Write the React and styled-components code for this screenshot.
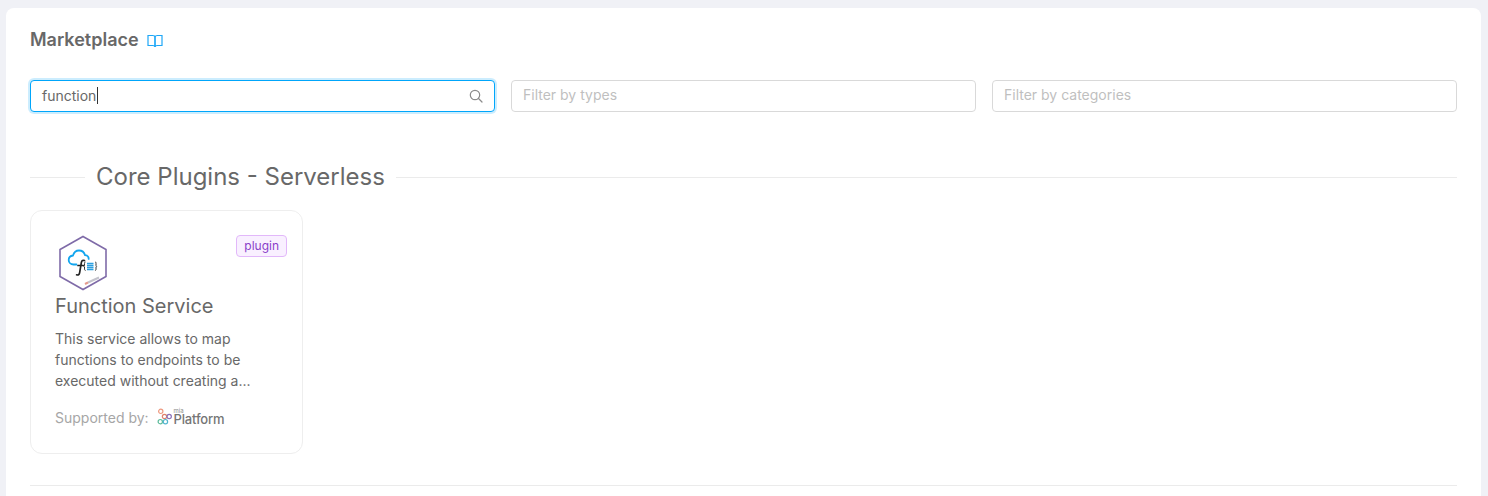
import React from "react";
import styled, { createGlobalStyle } from "styled-components";

const Global = createGlobalStyle`
  html, body {
    margin: 0;
    height: 100%;
    overflow: hidden;
    background: #f0f1f6;
    font-family: Inter, "Liberation Sans", sans-serif;
  }
  * { box-sizing: border-box; }
`;

const Panel = styled.main`
  margin: 8px 7px 0 6px;
  height: 488px;
  padding: 20px 24px 0;
  background: #fff;
  border-radius: 8px 8px 0 0;
  overflow: hidden;
`;

const TitleRow = styled.div`
  display: flex;
  align-items: center;
  gap: 8px;
  height: 24px;
`;

const Title = styled.h1`
  margin: 0;
  font-size: 18px;
  line-height: 24px;
  font-weight: 600;
  color: #686868;
`;

const Filters = styled.div`
  display: grid;
  grid-template-columns: repeat(3, 465px);
  gap: 16px;
  margin-top: 28px;
`;

const Field = styled.div`
  display: flex;
  align-items: center;
  justify-content: space-between;
  height: 32px;
  padding: 0 11px ${(p) => (p.$active ? "2px" : "3px")};
  border-radius: 4px;
  border: 1px solid ${(p) => (p.$active ? "#00a6fb" : "#d9d9d9")};
  box-shadow: ${(p) => (p.$active ? "0 0 0 2px rgba(0, 166, 251, 0.2)" : "none")};
  background: #fff;
  font-size: 14px;
  color: ${(p) => (p.$active ? "#686868" : "#bfbfbf")};
`;

const Typed = styled.span`
  display: inline-block;
  padding-right: 1px;
  border-right: 1px solid #333;
  line-height: 17px;
`;

const SearchIcon = styled.svg`
  width: 14px;
  height: 14px;
  margin-top: 2px;
`;

const SectionHeading = styled.div`
  display: flex;
  align-items: center;
  gap: 11px;
  margin-top: 48px;
  height: 34px;
  &::before, &::after {
    content: "";
    height: 1px;
    background: #ebebeb;
  }
  &::before { width: 55px; }
  &::after { flex: 1; }
`;

const SectionTitle = styled.h2`
  margin: 0;
  font-size: 24px;
  line-height: 34px;
  font-weight: 400;
  color: #686868;
`;

const Card = styled.article`
  position: relative;
  width: 273px;
  height: 244px;
  margin-top: 16px;
  padding: 24px 24px 0;
  border: 1px solid #eeeeee;
  border-radius: 12px;
  background: #fff;
`;

const Badge = styled.span`
  position: absolute;
  top: 24px;
  right: 15px;
  height: 22px;
  padding: 0 7px;
  border: 1px solid #e2b8fa;
  border-radius: 4px;
  background: #f9f0ff;
  color: #8a3fc9;
  font-size: 12px;
  line-height: 20px;
`;

const Logo = styled.svg`
  display: block;
  width: 56px;
  height: 56px;
`;

const CardTitle = styled.h3`
  margin: 2px 0 0;
  font-size: 20px;
  line-height: 26px;
  font-weight: 400;
  color: #686868;
`;

const Description = styled.p`
  margin: 9px 0 0;
  width: 205px;
  font-size: 14px;
  line-height: 21px;
  color: #686868;
`;

const Support = styled.div`
  display: flex;
  align-items: center;
  gap: 8px;
  margin-top: 16px;
  font-size: 14px;
  line-height: 22px;
  color: #a6a6a6;
`;

const Brand = styled.span`
  display: flex;
  align-items: center;
  gap: 2px;
  margin-top: -3px;
`;

const Wordmark = styled.span`
  display: flex;
  flex-direction: column;
  color: #757575;
`;

const WordmarkSmall = styled.span`
  font-size: 6px;
  line-height: 5px;
  color: #8c8c8c;
`;

const WordmarkLarge = styled.span`
  font-size: 13px;
  line-height: 12px;
  font-weight: 500;
  letter-spacing: -0.2px;
`;

const Rule = styled.hr`
  margin: 31px 0 0;
  border: 0;
  border-top: 1px solid #ebebeb;
`;

const BookIcon = () => (
  <svg width="16" height="16" viewBox="0 0 16 16" fill="none" stroke="#1ea7f7" strokeWidth="1.2">
    <path d="M1 3.500h4.500c1.300 0 2.500.6 2.500 1.800V15c0-1-1-1.500-2.300-1.500H1z" />
    <path d="M15 3.500h-4.500C9.200 3.500 8 4.100 8 5.300V15c0-1 1-1.500 2.300-1.500H15z" />
  </svg>
);

const ServiceLogo = () => (
  <Logo viewBox="0 0 56 56" fill="none">
    <path d="M28 1.500 51 14.500v27L28 54.500 5 41.500v-27z" stroke="#7f6ba8" strokeWidth="1.600" />
    <path
      d="M21.500 29.500h-3c-2.800 0-4.800-2-4.800-4.500s1.800-4.200 4.300-4.500c.9-3.200 3.200-5 6-5 3 0 5.200 1.800 6 4.600 2.200.2 3.700 1.800 3.700 3.800"
      stroke="#12a5ee"
      strokeWidth="1.800"
      strokeLinecap="round"
    />
    <path
      d="M29.500 25.500c-1.600-.6-2.800.2-3.100 1.800l-1.800 10.500c-.3 1.800-1.500 2.600-3 2M23 30.500h5.500"
      stroke="#222"
      strokeWidth="1.700"
      strokeLinecap="round"
    />
    <path d="M30.500 27c-1 0-1 .7-1 1.500v2l-.7.7.7.7v2c0 .8 0 1.500 1 1.500" stroke="#333" strokeWidth="1" />
    <path d="M40 27c1 0 1 .7 1 1.500v2l.7.7-.7.7v2c0 .8 0 1.500-1 1.500" stroke="#333" strokeWidth="1" />
    <path d="M32 28.500h6.500M32 30.500h6.500M32 32.500h6.500M32 34.500h6.500" stroke="#2b9fe0" strokeWidth="1.300" />
    <path d="M33 47.500l11-5" stroke="#c3c3cc" strokeWidth="2" />
    <path d="M30 49l3-1.500" stroke="#e59a8c" strokeWidth="2" />
  </Logo>
);

const PlatformMark = () => (
  <svg width="15" height="17" viewBox="0 0 16 17" fill="none" strokeWidth="1.300">
    <circle cx="4" cy="3" r="2.300" stroke="#ee9a80" />
    <circle cx="8" cy="8.500" r="2.300" stroke="#e0836c" />
    <circle cx="13" cy="8.500" r="2.300" stroke="#8b71b8" />
    <circle cx="3.500" cy="14" r="2.300" stroke="#5dbb9b" />
    <circle cx="9" cy="14" r="2.300" stroke="#52b5cf" />
  </svg>
);

export default function App() {
  return (
    <>
      <Global />
      <Panel>
        <TitleRow>
          <Title>Marketplace</Title>
          <BookIcon />
        </TitleRow>
        <Filters>
          <Field $active>
            <Typed>function</Typed>
            <SearchIcon viewBox="0 0 14 14" fill="none" stroke="#8c8c8c" strokeWidth="1.200">
              <circle cx="6" cy="6" r="4.700" />
              <path d="M9.500 9.500 13 13" strokeLinecap="round" />
            </SearchIcon>
          </Field>
          <Field>Filter by types</Field>
          <Field>Filter by categories</Field>
        </Filters>
        <SectionHeading>
          <SectionTitle>Core Plugins - Serverless</SectionTitle>
        </SectionHeading>
        <Card>
          <Badge>plugin</Badge>
          <ServiceLogo />
          <CardTitle>Function Service</CardTitle>
          <Description>
            This service allows to map functions to endpoints to be executed without creating a...
          </Description>
          <Support>
            Supported by:
            <Brand>
              <PlatformMark />
              <Wordmark>
                <WordmarkSmall>mia</WordmarkSmall>
                <WordmarkLarge>Platform</WordmarkLarge>
              </Wordmark>
            </Brand>
          </Support>
        </Card>
        <Rule />
      </Panel>
    </>
  );
}
